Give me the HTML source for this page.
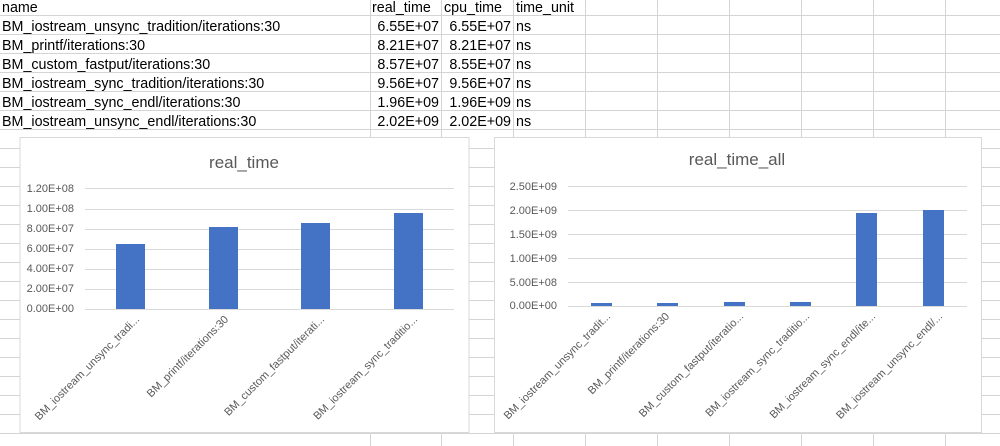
<!DOCTYPE html>
<html><head><meta charset="utf-8"><style>
html,body{margin:0;padding:0;background:#fff;width:1000px;height:446px;overflow:hidden}
svg{display:block}
.c{font-family:"Liberation Sans","Noto Sans CJK SC",sans-serif;font-size:14.3px;fill:#000}
.ax{font-family:"Liberation Sans",sans-serif;font-size:11px;fill:#595959}
.t{font-family:"Liberation Sans",sans-serif;font-size:17px;fill:#595959}
</style></head><body>
<svg width="1000" height="446" xmlns="http://www.w3.org/2000/svg">
<g stroke="#d4d4d4" stroke-width="1">
<line x1="0" y1="15.5" x2="1000" y2="15.5"/><line x1="0" y1="34.5" x2="1000" y2="34.5"/>
<line x1="0" y1="53.5" x2="1000" y2="53.5"/><line x1="0" y1="72.5" x2="1000" y2="72.5"/>
<line x1="0" y1="91.5" x2="1000" y2="91.5"/><line x1="0" y1="110.5" x2="1000" y2="110.5"/>
<line x1="0" y1="129.5" x2="1000" y2="129.5"/><line x1="0" y1="148.5" x2="1000" y2="148.5"/>
<line x1="0" y1="167.5" x2="1000" y2="167.5"/><line x1="0" y1="186.5" x2="1000" y2="186.5"/>
<line x1="0" y1="205.5" x2="1000" y2="205.5"/><line x1="0" y1="224.5" x2="1000" y2="224.5"/>
<line x1="0" y1="243.5" x2="1000" y2="243.5"/><line x1="0" y1="262.5" x2="1000" y2="262.5"/>
<line x1="0" y1="281.5" x2="1000" y2="281.5"/><line x1="0" y1="300.5" x2="1000" y2="300.5"/>
<line x1="0" y1="319.5" x2="1000" y2="319.5"/><line x1="0" y1="338.5" x2="1000" y2="338.5"/>
<line x1="0" y1="357.5" x2="1000" y2="357.5"/><line x1="0" y1="376.5" x2="1000" y2="376.5"/>
<line x1="0" y1="395.5" x2="1000" y2="395.5"/><line x1="0" y1="414.5" x2="1000" y2="414.5"/>
<line x1="0" y1="433.5" x2="1000" y2="433.5"/>
<line x1="370.5" y1="0" x2="370.5" y2="446"/><line x1="441.5" y1="0" x2="441.5" y2="446"/>
<line x1="513.5" y1="0" x2="513.5" y2="446"/><line x1="585.5" y1="0" x2="585.5" y2="446"/>
<line x1="657.5" y1="0" x2="657.5" y2="446"/><line x1="729.5" y1="0" x2="729.5" y2="446"/>
<line x1="801.5" y1="0" x2="801.5" y2="446"/><line x1="873.5" y1="0" x2="873.5" y2="446"/>
<line x1="945.5" y1="0" x2="945.5" y2="446"/>
</g>
<rect x="0" y="0" width="370" height="15" fill="#fff"/>
<g class="c">
<text x="2" y="12">name</text><text x="372" y="12">real_time</text><text x="444" y="12">cpu_time</text><text x="516" y="12">time_unit</text>
<text x="2" y="31">BM_iostream_unsync_tradition/iterations:30</text>
<text x="2" y="50">BM_printf/iterations:30</text>
<text x="2" y="69">BM_custom_fastput/iterations:30</text>
<text x="2" y="88">BM_iostream_sync_tradition/iterations:30</text>
<text x="2" y="107">BM_iostream_sync_endl/iterations:30</text>
<text x="2" y="126">BM_iostream_unsync_endl/iterations:30</text>
</g>
<g class="c" text-anchor="end">
<text x="439" y="31">6.55E+07</text><text x="511" y="31">6.55E+07</text>
<text x="439" y="50">8.21E+07</text><text x="511" y="50">8.21E+07</text>
<text x="439" y="69">8.57E+07</text><text x="511" y="69">8.55E+07</text>
<text x="439" y="88">9.56E+07</text><text x="511" y="88">9.56E+07</text>
<text x="439" y="107">1.96E+09</text><text x="511" y="107">1.96E+09</text>
<text x="439" y="126">2.02E+09</text><text x="511" y="126">2.02E+09</text>
</g>
<g class="c"><text x="516" y="31">ns</text><text x="516" y="50">ns</text><text x="516" y="69">ns</text><text x="516" y="88">ns</text><text x="516" y="107">ns</text><text x="516" y="126">ns</text></g>
<rect x="0" y="130" width="370" height="7" fill="#fff"/>

<!-- chart 1 -->
<rect x="20" y="137.5" width="449" height="295" fill="#fff" stroke="#d9d9d9"/>
<text class="t" x="244" y="168" text-anchor="middle">real_time</text>
<g stroke="#d9d9d9"><line x1="85" y1="188.5" x2="454" y2="188.5"/><line x1="85" y1="209.5" x2="454" y2="209.5"/><line x1="85" y1="229.5" x2="454" y2="229.5"/><line x1="85" y1="249.5" x2="454" y2="249.5"/><line x1="85" y1="269.5" x2="454" y2="269.5"/><line x1="85" y1="289.5" x2="454" y2="289.5"/><line x1="85" y1="309.5" x2="454" y2="309.5"/></g>
<g class="ax" text-anchor="end"><text x="74" y="192">1.20E+08</text><text x="74" y="212">1.00E+08</text><text x="74" y="232">8.00E+07</text><text x="74" y="252">6.00E+07</text><text x="74" y="272">4.00E+07</text><text x="74" y="292">2.00E+07</text><text x="74" y="312">0.00E+00</text></g>
<g fill="#4472c4"><rect x="116" y="244" width="29" height="65"/><rect x="209" y="227" width="29" height="82"/><rect x="301" y="223" width="29" height="86"/><rect x="394" y="213" width="29" height="96"/></g>
<g class="ax" text-anchor="end">
<text transform="translate(140,320) rotate(-45)">BM_iostream_unsync_tradi...</text>
<text transform="translate(229,320) rotate(-45)">BM_printf/iterations:30</text>
<text transform="translate(325,320) rotate(-45)">BM_custom_fastput/iterati...</text>
<text transform="translate(418,320) rotate(-45)">BM_iostream_sync_traditio...</text>
</g>

<!-- chart 2 -->
<rect x="494.5" y="137.5" width="487" height="295" fill="#fff" stroke="#d9d9d9"/>
<text class="t" x="737" y="165" text-anchor="middle">real_time_all</text>
<g stroke="#d9d9d9"><line x1="568" y1="186.5" x2="967" y2="186.5"/><line x1="568" y1="210.5" x2="967" y2="210.5"/><line x1="568" y1="234.5" x2="967" y2="234.5"/><line x1="568" y1="258.5" x2="967" y2="258.5"/><line x1="568" y1="282.5" x2="967" y2="282.5"/><line x1="568" y1="306.5" x2="967" y2="306.5"/></g>
<g class="ax" text-anchor="end"><text x="557" y="190">2.50E+09</text><text x="557" y="214">2.00E+09</text><text x="557" y="238">1.50E+09</text><text x="557" y="262">1.00E+09</text><text x="557" y="286">5.00E+08</text><text x="557" y="309">0.00E+00</text></g>
<g fill="#4472c4"><rect x="591" y="303" width="21" height="3"/><rect x="657" y="303" width="21" height="3"/><rect x="724" y="302" width="21" height="4"/><rect x="790" y="302" width="21" height="4"/><rect x="856" y="213" width="21" height="93"/><rect x="923" y="210" width="21" height="96"/></g>
<g class="ax" text-anchor="end">
<text transform="translate(611,317) rotate(-45)">BM_iostream_unsync_tradit...</text>
<text transform="translate(670,317) rotate(-45)">BM_printf/iterations:30</text>
<text transform="translate(744,317) rotate(-45)">BM_custom_fastput/iteratio...</text>
<text transform="translate(810,317) rotate(-45)">BM_iostream_sync_traditio...</text>
<text transform="translate(876,317) rotate(-45)">BM_iostream_sync_endl/ite...</text>
<text transform="translate(943,317) rotate(-45)">BM_iostream_unsync_endl/...</text>
</g>
</svg>
</body></html>
